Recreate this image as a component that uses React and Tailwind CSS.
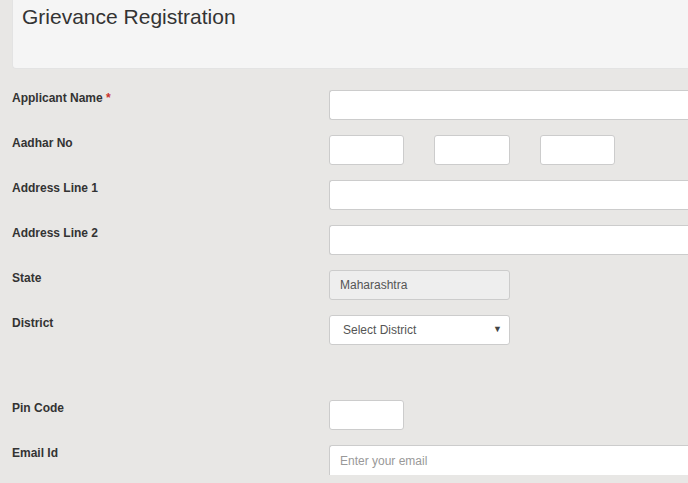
const Field = ({ label, required, children, extra = "" }) => (
  <div className={`flex ${extra}`}>
    <div className="w-[317px] shrink-0 pt-[1px] text-[12px] font-bold leading-[15px] text-[#333]">
      {label}
      {required && <span className="text-[#c9302c]"> *</span>}
    </div>
    <div className="flex flex-1 gap-[30px]">{children}</div>
  </div>
);

const inputCls =
  "h-[30px] rounded-[3px] border border-[#cccccc] px-[10px] text-[12px] text-[#555] outline-none";

const App = () => {
  return (
    <div
      className="h-[483px] w-[688px] overflow-hidden bg-[#e8e7e5] pl-[12px]"
      style={{ fontFamily: '"Liberation Sans", Arial, sans-serif' }}
    >
      <div className="-mt-[4px] h-[73px] rounded-bl-[4px] border border-r-0 border-[#e3e3e3] bg-[#f5f5f5] pl-[9px] pt-[8px]">
        <h1 className="text-[21px] font-normal leading-[24px] text-[#333]">
          Grievance Registration
        </h1>
      </div>

      <div className="mt-[21px] flex flex-col gap-[15px]">
        <Field label="Applicant Name" required>
          <input className={`${inputCls} flex-1 rounded-r-none border-r-0 bg-white`} />
        </Field>
        <Field label="Aadhar No">
          <input className={`${inputCls} w-[75px] bg-white`} />
          <input className={`${inputCls} w-[76px] bg-white`} />
          <input className={`${inputCls} w-[75px] bg-white`} />
        </Field>
        <Field label="Address Line 1">
          <input className={`${inputCls} flex-1 rounded-r-none border-r-0 bg-white`} />
        </Field>
        <Field label="Address Line 2">
          <input className={`${inputCls} flex-1 rounded-r-none border-r-0 bg-white`} />
        </Field>
        <Field label="State">
          <input
            className={`${inputCls} w-[181px] bg-[#eeeeee]`}
            value="Maharashtra"
            readOnly
          />
        </Field>
        <Field label="District" extra="h-[70px]">
          <div className={`${inputCls} flex w-[181px] items-center justify-between bg-white pl-[13px] pr-[7px] text-[#333]`}>
            <span>Select District</span>
            <span className="text-[9px] text-[#444]">▼</span>
          </div>
        </Field>
        <Field label="Pin Code">
          <input className={`${inputCls} w-[75px] bg-white`} />
        </Field>
        <Field label="Email Id">
          <input
            className={`${inputCls} h-[26px] flex-1 rounded-b-none rounded-r-none border-b-0 border-r-0 bg-white placeholder:text-[#999]`}
            placeholder="Enter your email"
          />
        </Field>
      </div>
    </div>
  );
};

export default App;
